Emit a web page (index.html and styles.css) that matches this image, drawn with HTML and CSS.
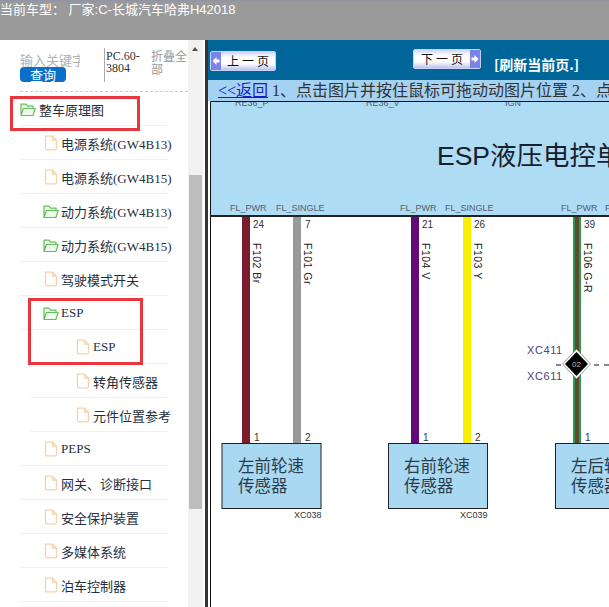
FILE: index.html
```html
<!DOCTYPE html>
<html lang="zh">
<head>
<meta charset="utf-8">
<title>ESP</title>
<link rel="stylesheet" href="styles.css">
</head>
<body>
<svg class="defs" width="0" height="0" aria-hidden="true">
  <symbol id="i-file" viewBox="0 0 14 16"><path d="M1.5 1.2h7l4 4v8.300a1.300 1.300 0 0 1-1.300 1.300H2.800a1.300 1.300 0 0 1-1.300-1.300z M8.500 1.200v4h4" fill="#fff" stroke="#f2d3ae" stroke-width="1.300"/></symbol>
  <symbol id="i-folder" viewBox="0 0 16 15"><path d="M1 13V2.200h5l1.500 2h5.500v2.300M1 13.500l2.400-7h11.800l-2.300 7z" fill="#eef9ea" stroke="#63bf5d" stroke-width="1.200" stroke-linejoin="round"/></symbol>
  <symbol id="i-left" viewBox="0 0 10 18"><path d="M1.500 9l4-4v2.500h3v3h-3V13z" fill="#fff"/></symbol>
  <symbol id="i-right" viewBox="0 0 10 18"><path d="M8.500 9l-4-4v2.500h-3v3h3V13z" fill="#fff"/></symbol>
</svg>
<header class="top">当前车型： 厂家:C-长城汽车哈弗H42018</header>
<div class="main">
  <aside class="side">
    <div class="side-scroll">
      <div class="search">
        <div class="search-l">
          <div class="kw">输入关键字</div>
          <div class="go">查询</div>
        </div>
        <div class="pc">PC.60-3804</div>
        <div class="fold">折叠全部</div>
      </div>
      <ul class="tree">
        <li class="row root"><svg class="ic-folder"><use href="#i-folder"/></svg>整车原理图</li>
        <li class="row l1"><svg class="ic"><use href="#i-file"/></svg>电源系统(GW4B13)</li>
        <li class="row l1"><svg class="ic"><use href="#i-file"/></svg>电源系统(GW4B15)</li>
        <li class="row l1"><svg class="ic-folder"><use href="#i-folder"/></svg>动力系统(GW4B13)</li>
        <li class="row l1"><svg class="ic-folder"><use href="#i-folder"/></svg>动力系统(GW4B15)</li>
        <li class="row l1"><svg class="ic"><use href="#i-file"/></svg>驾驶模式开关</li>
        <li class="row l1"><svg class="ic-folder"><use href="#i-folder"/></svg>ESP</li>
        <li class="row l2"><svg class="ic"><use href="#i-file"/></svg>ESP</li>
        <li class="row l2"><svg class="ic"><use href="#i-file"/></svg>转角传感器</li>
        <li class="row l2"><svg class="ic"><use href="#i-file"/></svg>元件位置参考</li>
        <li class="row l1"><svg class="ic"><use href="#i-file"/></svg>PEPS</li>
        <li class="row l1"><svg class="ic"><use href="#i-file"/></svg>网关、诊断接口</li>
        <li class="row l1"><svg class="ic"><use href="#i-file"/></svg>安全保护装置</li>
        <li class="row l1"><svg class="ic"><use href="#i-file"/></svg>多媒体系统</li>
        <li class="row l1"><svg class="ic"><use href="#i-file"/></svg>泊车控制器</li>
      </ul>
      <div class="mark mark-a"></div>
      <div class="mark mark-b"></div>
    </div>
    <div class="scrollbar"><span class="arrow"></span><span class="thumb"></span></div>
  </aside>
  <section class="view">
    <div class="toolbar">
      <div class="pager prev"><svg class="sq"><use href="#i-left"/></svg><span class="lbl">上一页</span></div>
      <div class="pager next"><span class="lbl">下一页</span><svg class="sq"><use href="#i-right"/></svg></div>
      <div class="refresh">[刷新当前页.]</div>
    </div>
    <div class="tip"><a href="#">&lt;&lt;返回</a> 1、点击图片并按住鼠标可拖动动图片位置 2、点击图片并按住鼠标</div>
    <svg class="diagram" viewBox="208 101 401 506">
      <rect x="208" y="101" width="401" height="506" fill="#fff"/>
      <rect x="211" y="102" width="398" height="113" fill="#aedcf5"/>
      <g class="tiny">
        <text x="235" y="106">RE36_P</text><text x="366" y="106">RE36_V</text><text x="505" y="106">IGN</text>
        <text x="230" y="211">FL_PWR</text><text x="276" y="211">FL_SINGLE</text>
        <text x="400" y="211">FL_PWR</text><text x="445" y="211">FL_SINGLE</text>
        <text x="561" y="211">FL_PWR</text><text x="605" y="211">FL_SINGLE</text>
      </g>
      <path d="M210.500 101.500H609M210.500 101.500V607" stroke="#111" fill="none"/>
      <rect x="210" y="215" width="399" height="2" fill="#222"/>
      <text class="title" x="437" y="165">ESP液压电控单元</text>
      <rect x="242" y="217" width="8" height="226" fill="#7a1c2c"/>
      <rect x="293" y="217" width="8" height="226" fill="#979a98"/>
      <rect x="411" y="217" width="8" height="226" fill="#640a78"/>
      <rect x="463" y="217" width="8" height="226" fill="#f8f000"/>
      <rect x="573" y="217" width="8" height="226" fill="#2d9c50"/>
      <rect x="575" y="217" width="4" height="226" fill="#5d4a2c"/>
      <g class="num">
        <text x="253" y="228">24</text><text x="305" y="228">7</text>
        <text x="422" y="228">21</text><text x="474" y="228">26</text>
        <text x="584" y="228">39</text>
        <text x="254" y="441">1</text><text x="305" y="441">2</text>
        <text x="423" y="441">1</text><text x="475" y="441">2</text>
        <text x="585" y="441">1</text>
      </g>
      <g class="wire">
        <text transform="translate(253 243) rotate(90)">F102 Br</text>
        <text transform="translate(304 243) rotate(90)">F101 Gr</text>
        <text transform="translate(422 243) rotate(90)">F104 V</text>
        <text transform="translate(474 243) rotate(90)">F103 Y</text>
        <text transform="translate(584 243) rotate(90)">F106 G-R</text>
      </g>
      <text class="conn" x="527" y="354">XC411</text>
      <text class="conn" x="527" y="380">XC611</text>
      <path d="M556 365h5M594 365h5M604 365h5" stroke="#111" stroke-width="1.200"/>
      <path d="M576.500 349l14 15-14 15-14-15z" fill="#fff" stroke="#555" stroke-width=".6"/>
      <path d="M576.500 352l11.500 12-11.500 12-11.500-12z" fill="#000"/>
      <text class="diam" x="576.500" y="367">02</text>
      <g class="box"><rect x="222" y="443.500" width="99" height="65"/><text x="238" y="472">左前轮速<tspan x="238" dy="20">传感器</tspan></text></g>
      <g class="box"><rect x="388.500" y="443.500" width="99" height="65"/><text x="404" y="472">右前轮速<tspan x="404" dy="20">传感器</tspan></text></g>
      <g class="box"><rect x="555.500" y="443.500" width="99" height="65"/><text x="571" y="472">左后轮速<tspan x="571" dy="20">传感器</tspan></text></g>
      <text class="tag" x="294" y="518">XC038</text>
      <text class="tag" x="460" y="518">XC039</text>
    </svg>
  </section>
</div>
</body>
</html>
```
FILE: styles.css
```css
* { box-sizing: border-box; }
html, body { margin: 0; height: 100%; overflow: hidden; }
body { font-family: "Liberation Serif", "Noto Sans CJK SC", serif; background: #fff; width: 609px; height: 607px; display: flex; flex-direction: column; }
.defs { position: absolute; }
.top { height: 40px; flex: none; background: linear-gradient(#8d93a8 0, #9a9a9a 2px); color: #fff; font: 13px/17px "Liberation Sans", "Noto Sans CJK SC", sans-serif; padding-top: 1px; white-space: nowrap; overflow: hidden; }
.main { flex: 1; display: flex; min-height: 0; }
.side { width: 208px; flex: none; display: flex; border-right: 3px solid #333; position: relative; }
.side-scroll { width: 188px; flex: none; position: relative; overflow: hidden; }
.search { margin-left: 20px; border-bottom: 1px dashed #c8d0c8; display: flex; height: 52px; }
.search-l { width: 84px; padding-top: 12px; }
.kw { width: 60px; height: 15px; overflow: hidden; white-space: nowrap; color: #b0b0b0; font: 13px/15px "Noto Sans CJK SC", sans-serif; }
.go { width: 46px; height: 15px; background: #0a6fc9; color: #fff; border-radius: 4px; text-align: center; font: 13px/15px "Noto Sans CJK SC", sans-serif; }
.pc { width: 47px; height: 34px; margin-top: 8px; padding: 2px 0 0 1px; border-left: 1px solid #aaa; font-size: 12px; line-height: 12px; color: #333; }
.fold { width: 37px; margin-top: 9px; color: #999; font: 12px/13px "Noto Sans CJK SC", sans-serif; word-break: break-all; }
.tree { list-style: none; margin: 0; padding: 0; }
.row { height: 34px; display: flex; align-items: center; font-size: 13px; color: #24303d; white-space: nowrap; position: relative; }
.row::after { content: ""; position: absolute; right: 20px; bottom: 0; height: 1px; background: #f1f1f1; }
.root { padding-left: 20px; }
.root::after { left: 20px; }
.l1 { padding-left: 44px; }
.l1::after { left: 20px; }
.l2 { padding-left: 76px; }
.l2::after { left: 30px; }
.ic { width: 14px; height: 16px; margin-right: 3px; flex: none; }
.ic-folder { width: 16px; height: 15px; margin-right: 2px; margin-left: -1px; flex: none; }
.root .ic-folder { margin: 0 3px 0 0; }
.mark { position: absolute; border: 3px solid #e8363f; }
.mark-a { left: 10px; top: 56px; width: 130px; height: 35px; }
.mark-b { left: 28px; top: 258px; width: 115px; height: 67px; }
.scrollbar { width: 17px; flex: none; background: #f1f1f1; position: relative; border-right: 2px solid #fff; }
.arrow { position: absolute; left: 4px; top: 7px; width: 0; height: 0; border: 3.500px solid transparent; border-bottom: 4px solid #505050; border-top: 0; }
.thumb { position: absolute; left: 1px; right: 1px; top: 135px; height: 334px; background: #bdbdbd; }
.view { flex: 1; min-width: 0; display: flex; flex-direction: column; overflow: hidden; }
.toolbar { height: 40px; flex: none; background: #006699; display: flex; align-items: flex-start; padding-left: 2px; }
.pager { height: 20px; display: flex; align-items: center; background: linear-gradient(#cfd4f7, #fff 30%, #fff 65%, #bcc2ef); border: 1px solid #c8d4f4; border-radius: 2px; font: 12px/18px "Noto Sans CJK SC", sans-serif; color: #111; }
.pager .lbl { flex: 1; text-align: center; letter-spacing: 3px; padding-left: 3px; }
.sq { width: 10px; height: 18px; background: #7b83ea; flex: none; }
.prev { width: 66px; margin-top: 11px; }
.next { width: 68px; margin-top: 9px; margin-left: 137px; }
.refresh { margin: 15px 0 0 13px; color: #fff; font: bold 14px/18px "Noto Sans CJK SC", sans-serif; white-space: nowrap; }
.tip { height: 21px; flex: none; background: #a5d1f3; font-size: 16px; line-height: 20px; padding: 1px 0 0 10px; color: #333; white-space: nowrap; overflow: hidden; }
.tip a { color: #1a1ad0; }
.diagram { display: block; width: 401px; height: 506px; flex: none; }
.tiny text { font: 9px "Liberation Sans", sans-serif; fill: #56606c; }
.title { font: 26.500px "Liberation Sans", "Noto Sans CJK SC", sans-serif; fill: #18202c; }
.num text { font: 10px "Liberation Sans", sans-serif; fill: #333; }
.wire text { font: 10.500px "Liberation Sans", sans-serif; letter-spacing: .5px; fill: #222; }
.conn { font: 11px "Liberation Sans", sans-serif; letter-spacing: .6px; fill: #4b4480; }
.diam { font: 8px "Liberation Sans", sans-serif; fill: #bbb; text-anchor: middle; }
.box rect { fill: #a9d8f2; stroke: #222; stroke-width: 1; }
.box text { font: 16.500px "Noto Sans CJK SC", sans-serif; fill: #2b3a48; }
.tag { font: 9px "Liberation Sans", sans-serif; fill: #333; }
```
